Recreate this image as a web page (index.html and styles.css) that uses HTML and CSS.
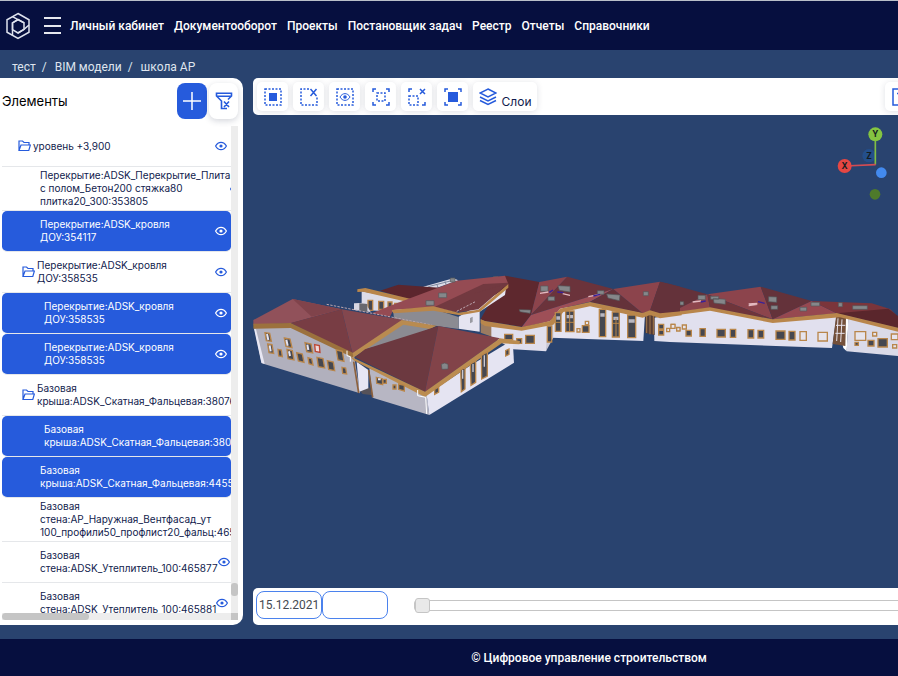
FILE: index.html
```html
<!DOCTYPE html>
<html lang="ru">
<head>
    <meta charset="UTF-8">
    <meta name="viewport" content="width=device-width, initial-scale=1.0">
    <title>школа АР | BIM модели</title>
    <link rel="stylesheet" href="styles.css">
</head>
<body>
    <svg width="0" height="0" class="sprite">
        <symbol id="eye" viewBox="0 0 12 10"><path d="M.6 5C3.2.1 8.800.1 11.400 5 8.800 9.900 3.200 9.900.6 5z" fill="none" stroke="currentColor" stroke-width="1.200"/><circle cx="6" cy="5" r="1.600" fill="currentColor"/></symbol>
        <symbol id="folder" viewBox="0 0 13 12"><path d="M1 10.500V1h3.500l1.500 1.500h5V5M1 10.500L3 5h9.400l-1.600 5.500z" fill="none" stroke="currentColor" stroke-width="1.200"/></symbol>
    </svg>

    <header class="header">
        <a href="#" class="logo" aria-label="Главная">
            <svg width="26" height="28" viewBox="0 0 26 28" fill="none" stroke="#dfe3ee" stroke-width="1.500">
                <path d="M13 1.500L24 7.800v12.400L13 26.500 2 20.200V7.800z"/>
                <path d="M13 7.500l6 3.300v6.600L13 21l-5.500-3.400v-6.800z"/>
                <path d="M7.500 23.500V10.800L13 7.500M7.500 4.600L19 10.800M24 13l-5 4.400-6 3.600"/>
            </svg>
        </a>
        <button class="burger" aria-label="Меню"><span></span><span></span><span></span></button>
        <nav class="nav">
            <a href="#">Личный кабинет</a>
            <a href="#">Документооборот</a>
            <a href="#">Проекты</a>
            <a href="#">Постановщик задач</a>
            <a href="#">Реестр</a>
            <a href="#">Отчеты</a>
            <a href="#">Справочники</a>
        </nav>
    </header>

    <div class="crumbs">
        <a href="#">тест</a><span>/</span><a href="#">BIM модели</a><span>/</span><a href="#">школа АР</a>
    </div>

    <main class="main">
        <aside class="sidebar">
            <div class="sidebar-head">
                <h2>Элементы</h2>
                <button class="btn-add" aria-label="Добавить"><svg width="18" height="18" viewBox="0 0 18 18" stroke="#fff" stroke-width="1.500"><path d="M9 0v18M0 9h18"/></svg></button>
                <button class="btn-filter" aria-label="Сбросить фильтр"><svg width="18" height="18" viewBox="0 0 18 18" fill="none" stroke="#265bdc" stroke-width="1.600"><path d="M12 16.500H6.500V9L1.500 4V1.300h15V4L13 7.500M2 4.200h14M9 9.500l5 5.500M14 9.500L9 15"/></svg></button>
            </div>
            <div class="tree-box">
                <ul class="tree">
                    <li class="row level"><svg class="folder"><use href="#folder"/></svg><span>уровень +3,900</span><svg class="eye"><use href="#eye"/></svg></li>
                    <li class="row item tall"><span>Перекрытие:ADSK_Перекрытие_Плита<br>с полом_Бетон200 стяжка80<br>плитка20_300:353805</span><svg class="eye"><use href="#eye"/></svg></li>
                    <li class="row item active"><span>Перекрытие:ADSK_кровля<br>ДОУ:354117</span><svg class="eye"><use href="#eye"/></svg></li>
                    <li class="row group"><svg class="folder"><use href="#folder"/></svg><span>Перекрытие:ADSK_кровля<br>ДОУ:358535</span><svg class="eye"><use href="#eye"/></svg></li>
                    <li class="row sub active"><span>Перекрытие:ADSK_кровля<br>ДОУ:358535</span><svg class="eye"><use href="#eye"/></svg></li>
                    <li class="row sub active"><span>Перекрытие:ADSK_кровля<br>ДОУ:358535</span><svg class="eye"><use href="#eye"/></svg></li>
                    <li class="row group"><svg class="folder"><use href="#folder"/></svg><span>Базовая<br>крыша:ADSK_Скатная_Фальцевая:38076</span></li>
                    <li class="row sub active"><span>Базовая<br>крыша:ADSK_Скатная_Фальцевая:3807</span></li>
                    <li class="row item active"><span>Базовая<br>крыша:ADSK_Скатная_Фальцевая:4455</span></li>
                    <li class="row item tall"><span>Базовая<br>стена:АР_Наружная_Вентфасад_ут<br>100_профили50_профлист20_фальц:465</span></li>
                    <li class="row item"><span>Базовая<br>стена:ADSK_Утеплитель_100:465877</span><svg class="eye"><use href="#eye"/></svg></li>
                    <li class="row item"><span>Базовая<br>стена:ADSK_Утеплитель_100:465881</span><svg class="eye"><use href="#eye"/></svg></li>
                </ul>
                <div class="track-y"><div class="thumb"></div></div>
                <div class="track-x"><div class="thumb"></div></div>
                <div class="corner"></div>
            </div>
        </aside>

        <section class="workspace">
            <div class="toolbar">
                <button aria-label="Выделить"><svg viewBox="0 0 18 18"><rect class="dash" x="1" y="1" width="16" height="16"/><path class="solid" d="M5 5h8v8H5z"/></svg></button>
                <button aria-label="Снять выделение"><svg viewBox="0 0 18 18"><path class="dash" d="M9 1H1v16h16V9"/><path class="line" d="M10.500 1l6 7M16.500 1l-6 7"/></svg></button>
                <button aria-label="Показать"><svg viewBox="0 0 18 18"><rect class="dash" x="1" y="1" width="16" height="16"/><path class="thin" d="M4 9c2.500-4.500 7.500-4.500 10 0-2.500 4.500-7.500 4.500-10 0z"/><circle class="solid" cx="9" cy="9" r="1.800"/></svg></button>
                <button aria-label="Рамка"><svg viewBox="0 0 18 18"><path class="line" d="M1 4V1h3M14 1h3v3M17 14v3h-3M4 17H1v-3"/><rect class="dash" x="5" y="5" width="8" height="8"/></svg></button>
                <button aria-label="Убрать рамку"><svg viewBox="0 0 18 18"><rect class="dash" x="1" y="8" width="9" height="9"/><path class="line" d="M1 4V1h3M17 14v3h-3M12 1l5 5M17 1l-5 5"/></svg></button>
                <button aria-label="Изолировать"><svg viewBox="0 0 18 18"><path class="line" d="M1 4V1h3M14 1h3v3M17 14v3h-3M4 17H1v-3"/><path class="solid" d="M4 4h10v10H4z"/></svg></button>
                <button class="layers"><svg viewBox="0 0 18 18"><path class="line" d="M9 1l8 4-8 4-8-4zM1 9l8 4 8-4M1 12.500l8 4 8-4"/></svg><span>Слои</span></button>
                <button class="last" aria-label="Вид"><svg viewBox="0 0 18 18"><path class="line" d="M1 1h16v16H1zM5 5.500h8"/></svg></button>
            </div>

            <div class="viewer">
                <svg class="scene" viewBox="9 -435 1935 1419" preserveAspectRatio="xMinYMid slice">
                    <!-- правое крыло -->
                    <g transform="translate(1260 0)">
                        <path fill="#e1e0ee" d="M-48 173L0 165l120-15 188 35 192-20-14 99L0 246l-47-3z"/>
                        <path fill="#fff" d="M500 170l36 5-6 99-10-10z"/>
                        <path fill="#74503a" d="M498 170h30l-2 88-38-6z"/>
                        <path stroke="#e8e4ee" stroke-width="3" fill="none" d="M504 175l-4 68M516 178l-4 68M498 196h28M496 220h28"/>
                        <path fill="#dadae8" d="M535 174l149 38v76l-154-14z"/>
                        <path fill="#64323a" d="M-30 65L0 72l112 31L0 160l-60-5z"/>
                        <path fill="#8c444c" d="M112 103L0 159l120-16z"/>
                        <path fill="#8c444c" d="M112 103l160-23 36 98z"/>
                        <path fill="#6f353b" d="M112 103l196 75-188-35z"/>
                        <path fill="#64323a" d="M272 80l153 43-117 55z"/>
                        <path fill="#964850" d="M425 123l75 37-192 18z"/>
                        <path fill="#7b353b" d="M425 123l180 7 55 17 24 23v20l-184-30z"/>
                        <path fill="#5a262c" d="M500 160l155-14 29 22v36z"/>
                        <path fill="#b9864b" d="M0 158l120-16 188 36 192-19 184 44v12l-174-43-202 17-188-37L0 168z"/>
                        <g class="win">
                            <path d="M4 193h10v10H4zM20 202h9v9h-9zM37 195h12v12H37zM555 215h32v26h-32zM608 217h12v11h-12zM664 222h20v17h-20zM668 254h12v10h-12zM444 217h28v26h-28zM390 215h19v26h-19z"/>
                            <g class="glass"><path d="M48 211h16v17H48zM90 206h16v23H90zM141 208h25v23h-25zM181 208h16v24h-16zM234 209h17v25h-17zM264 211h17v23h-17zM318 213h27v25h-27zM357 214h18v26h-18zM555 247h10v9h-10zM594 241h18v17h-18zM624 236h28v25h-28z"/></g>
                        </g>
                        <path class="vent" d="M84 106h22v13H84zM130 115l36 3v15l-34-4zM122 109h24v9h-24zM296 110l24 1v16l-24-2zM303 137h20v11h-20zM390 142h20v11h-20zM423 127h26v11h-26zM505 128h12v12h-12zM548 137h44v11h-44zM30 125h11v10H30z"/>
                        <path class="mark" d="M68 126l25-3M236 137l26-4M236 132l26-2"/>
                        <path class="mark blue" d="M92 126l15-3M264 125l20 5"/>
                    </g>

                    <!-- средняя часть -->
                    <g transform="translate(630 0)">
                        <path fill="#9b7b61" d="M62 178l34 14v38l-34-12z"/>
                        <path fill="#e4e3f1" d="M280 165l10-20 110-12 155 28-5 82-275-10z"/>
                        <path fill="#e0dfed" d="M94 192l91 16 95-30-22 96-98-6-66-38z"/>
                        <path fill="#c9c8d6" d="M280 178v55l-22 41 4-82z"/>
                        <path fill="#563c34" d="M556 162h28v63l-28-6z"/>
                        <path stroke="#a3774a" stroke-width="3" d="M560 165v54M570 165v58M580 165v58"/>
                        <path fill="#5e282e" d="M135 47l103 19-25 99-28 35-110-17-13-6z"/>
                        <path fill="#8c444c" d="M238 66l84-16-109 115z"/>
                        <path fill="#6b333b" d="M322 50l138 37-247 78z"/>
                        <path fill="#9e4f57" d="M213 165L460 87l-70 38-90 21-30 38-85 18z"/>
                        <path fill="#64323a" d="M460 87l88 73-158-34z"/>
                        <path fill="#8c444c" d="M460 87l140-22-30 87-22 8z"/>
                        <path fill="#64323a" d="M600 65l60 15v75l-60 7-30-10z"/>
                        <path fill="#b9864b" d="M62 178l13 5 110 18 85-18 30-37 90-20 158 33 22-8 30 9 65-6v12l-65 9-30-10-22 8-158-34-80 17-30 38-95 18-110-14-13-8z"/>
                        <g class="win glass">
                            <path d="M286 158h17v56h-17zM317 153h25v62h-25zM418 148h19v82h-19zM457 156h21v75h-21zM503 165h24v68h-24zM367 197h20v20h-20zM197 226h26v24h-26zM134 223h24v16h-24zM170 236h15v14h-15zM596 193h15v14h-15zM596 211h15v14h-15zM262 198h13v48h-13z"/>
                        </g>
                        <path class="win" d="M376 184h10v10h-10zM351 206h9v10h-9zM620 205h9v10h-9zM633 193h12v12h-12zM650 203h10v10h-10z"/>
                        <path stroke="#b9b8c2" stroke-width="10" d="M289 174h11M320 170h19M421 165h13M460 175h15M506 183h18"/>
                        <path stroke="#b9864b" stroke-width="3" d="M329 153v62M468 175v56M286 187h17M317 187h25M457 190h21"/>
                        <path class="vent" d="M100 50h14v17h-14zM242 78h22v16h-22zM294 77l36 2v17l-32-5zM264 110h20v12h-20zM178 149l34 1-2 10-30-5zM412 92h20v11h-20zM440 102l40 3-2 17-34-8zM550 95h15v12h-15z"/>
                        <path class="mark" d="M240 100l25-4M308 101l22 5M385 110l35-7"/>
                        <path class="mark blue" d="M268 97l11-7M292 96l18 2M400 108l20-5"/>
                    </g>

                    <!-- задний корпус -->
                    <path fill="#dddce8" d="M335 94l150 28-20 34-130-6zM520 80l90-25 15 6-85 30z"/>
                    <path stroke="#7d899f" stroke-width="3" d="M535 80l70-18M560 72l4 10M585 64l4 12"/>
                    <path fill="#5c262d" d="M390 92l55-18 165 12-50 35-80-2z"/>
                    <path fill="#b9864b" d="M322 88l24-4 140 34-10 9-137-32-17 1z"/>
                    <path class="win glass" d="M354 121h14v30h-14zM386 124h15v24h-15zM414 126h12v18h-12zM434 130h12v10h-12z"/>
                    <path fill="#d7d6e2" d="M312 130l34-2 16 28-50-6z"/>
                    <path fill="#68686f" d="M328 130l24 2v24l-24-4z"/>
                    <path fill="#e5e4f1" d="M626 170l142-85-3 20-76 50v60l-63-9z"/>
                    <path fill="#999aa2" d="M660 174l8-4v16l-8 4z"/>
                    <path fill="#8b8b92" d="M430 155l120-8 76 24v36l-126-17-68-12z"/>
                    <path fill="#954b53" d="M365 160l75-30L620 62l145-15 10 25-155 84-70-15-120 9-10 20z"/>
                    <path fill="#723940" d="M555 140L700 72l75-4-4 8-151 80z"/>
                    <path fill="#b9864b" d="M425 150l125-11 75 19 60-9 90-77v11l-85 72-60 11-80-14-120 8z"/>
                    <path fill="#723940" d="M625 157l60-9 90-78-100 30z"/>
                    <path class="vent" d="M528 122h24v14h-24zM566 99h24v14h-24zM601 54h14v12h-14z"/>
                    <path stroke="#bba5ae" stroke-width="3" stroke-dasharray="7 4" d="M620 154l58-30M230 133l315 62" fill="none"/>

                    <!-- передний корпус -->
                    <path fill="#b1b0bd" d="M12 200l110-2 190 88 18 114-295-90z"/>
                    <path fill="#e8e7f3" d="M12 206l6 2 26 104-10-4z"/>
                    <path fill="#565259" d="M330 392l28-10 10 24-30-4z"/>
                    <path fill="#e7e6f4" d="M320 305l35 25v55l-27 10z"/>
                    <path fill="#91515a" d="M10 180l118-63 147 31-153 42-112 4z"/>
                    <path fill="#80434b" d="M128 117l147 31-90 22z"/>
                    <path fill="#783d44" d="M275 148l33 134-186-93z"/>
                    <path fill="#83474e" d="M275 148l185 32-152 102z"/>
                    <path fill="#8b8b92" d="M345 268l115-78 90 12-80 35z"/>
                    <path fill="#9c713d" d="M10 191l112-2 188 90v14L122 204l-112 2z"/>
                    <path fill="#b98b50" d="M308 279l147-99 105 17-20 10-80-13-150 99z"/>
                    <path fill="#b7b6c3" d="M358 325l172 75 8 65-170-52z"/>
                    <path fill="#e5e4f2" d="M530 404l130-87 128-77 4 68-254 157z"/>
                    <path fill="#6c3940" d="M315 292l30-24 220-70-40 198z"/>
                    <path fill="#824349" d="M565 198l185 37-225 161z"/>
                    <path fill="#bb8c50" d="M300 289l225 106 225-160 60 8-2 10-53-3-230 161-215-110z"/>
                    <path stroke="#8d613d" stroke-width="5" d="M311 305l15 94M356 330l12 82"/>
                    <path stroke="#fff" stroke-width="3" fill="none" d="M291 272v15l10 3v15M503 390v17l24 5 3 50"/>
                    <g class="win glass">
                        <path d="M45 218l14 2 5 24-15-2zM53 252l13 2 5 26-14-2zM84 268l10 2 3 20-11-2zM103 234l17 3 6 26-18-4zM111 268l16 4 5 28-18-4zM140 278l17 4 5 25-17-4zM165 248l18 4 5 27-18-4zM174 293l11 3 4 19-12-4zM201 292l18 4 5 28-19-4zM232 302l18 4 4 26-18-4zM259 270l18 4 5 30-18-4zM276 322l11 2 3 18-12-2zM379 352l18 4 1 18-18-4zM399 358h10v12h-10zM429 375h9v12h-9zM446 372l17 4v17l-17-5zM554 388l12-7v15l-12 7zM632 330l13-7v64l-11 8zM661 312l16-9v64l-14 9zM694 286l18-10v72l-17 9zM767 272l10-5v16l-10 5z"/>
                    </g>
                    <path d="M194 254l14 3 2 20-14-3z" fill="#eed8d9" stroke="#bd4734" stroke-width="4"/>
                    <path stroke="#e6e5f1" stroke-width="6" d="M51 222l4 18M59 256l3 18M109 239l4 18M117 274l3 14M172 254l3 16M384 358h8"/>
                    <path stroke="#c9c8d2" stroke-width="4" d="M638 330v26M669 312v24M703 286v34"/>
                    <path class="vent" d="M574 313l10-4 10 4v14l-18 1z"/>

                    <!-- оси -->
                    <g transform="translate(1650 -570)">
                        <circle cx="207" cy="257" r="20" fill="#244f8b"/>
                        <path stroke="#80bd45" stroke-width="5" d="M226 194v90"/>
                        <path stroke="#d24c53" stroke-width="5" d="M134 288l93-4"/>
                        <circle cx="226" cy="193" r="21" fill="#84c441"/>
                        <circle cx="134" cy="288" r="21" fill="#e64743"/>
                        <circle cx="244" cy="308" r="16" fill="#438aee"/>
                        <circle cx="225" cy="373" r="16" fill="#4e7a2b"/>
                        <text class="axis" x="226" y="202">Y</text>
                        <text class="axis" x="134" y="297">X</text>
                        <text class="axis" x="207" y="266">Z</text>
                    </g>
                </svg>
            </div>

            <div class="timeline">
                <input class="date" type="text" value="15.12.2021" aria-label="Дата начала">
                <input class="date" type="text" value="" aria-label="Дата окончания">
                <input class="slider" type="range" min="0" max="100" value="0" aria-label="Шкала времени">
            </div>
        </section>
    </main>

    <footer class="footer">© Цифровое управление строительством</footer>
</body>
</html>
```
FILE: styles.css
```css
* { box-sizing: border-box; }
body { margin: 0; min-height: 100vh; display: flex; flex-direction: column; background: #29436f; color: #111b4d; font-family: Inter, "Noto Sans", sans-serif; font-size: 12px; overflow: hidden; }
a { color: inherit; text-decoration: none; }
button { border: 0; padding: 0; cursor: pointer; font-family: inherit; }
svg { flex: none; }
.sprite { position: absolute; }

.header { height: 50px; flex: none; display: flex; align-items: center; padding-left: 5px; background: #060f3f; border-top: 1px solid #b9bfc9; color: #fff; }
.logo { display: flex; }
.burger { width: 17px; height: 17px; margin: 0 9px 0 13px; background: none; display: flex; flex-direction: column; justify-content: space-between; }
.burger span { width: 17px; height: 2px; background: #e6e8ef; }
.nav { display: flex; gap: 10px; font: 500 12px Roboto, sans-serif; white-space: nowrap; }

.crumbs { height: 28px; flex: none; display: flex; align-items: center; padding: 5px 0 0 12px; color: #dfe5ee; font-family: Roboto, sans-serif; }
.crumbs span { margin: 0 8px 0 6px; }

.main { flex: 1; display: flex; gap: 10px; min-height: 0; padding-bottom: 14px; }

.sidebar { width: 243px; flex: none; display: flex; flex-direction: column; background: #fff; border-radius: 0 10px 10px 0; padding: 5px 5px 5px 2px; }
.sidebar-head { height: 43px; flex: none; display: flex; align-items: flex-start; gap: 2px; }
.sidebar-head h2 { flex: 1; margin: 0; font-size: 13px; font-weight: 400; line-height: 36px; color: #000; }
.sidebar-head button { width: 29px; height: 36px; border-radius: 8px; display: flex; align-items: center; justify-content: center; }
.sidebar-head .btn-add { background: #265bdc; width: 30px; }
.btn-filter { background: #fff; box-shadow: 0 2px 6px rgba(40,50,80,0.2); }

.tree-box { flex: 1; min-height: 0; display: grid; grid-template-columns: 1fr 7px; grid-template-rows: 1fr 7px; }
.tree { list-style: none; margin: 0; padding: 0; min-width: 0; height: 487px; overflow: hidden; }
.row { height: 41px; display: flex; align-items: center; border-bottom: 1px solid #e5e7ea; padding-right: 4px; font-size: 10px; line-height: 13px; white-space: nowrap; }
.row.tall { height: 44px; }
.row.level { padding-left: 16px; }
.row.group { padding-left: 20px; }
.row.level span, .row.group span { padding-left: 2px; }
.row.item { padding-left: 38px; }
.row.sub { padding-left: 42px; }
.row.active { background: #265bdc; background-clip: padding-box; color: #fff; border-radius: 5px; }
.folder { width: 13px; height: 12px; color: #265bdc; }
.eye { width: 12px; height: 10px; margin-left: auto; color: #265bdc; }
.active .eye { color: #fff; }
.track-y { background: #ededed; padding-top: 457px; }
.track-y .thumb { height: 13px; border-radius: 3px; background: #c5c5c5; }
.track-x { background: #ededed; }
.track-x .thumb { width: 38%; height: 7px; border-radius: 4px; background: #c5c5c5; }
.corner { background: #c5c5c5; }

.workspace { flex: 1; min-width: 0; display: flex; flex-direction: column; overflow: hidden; }
.toolbar { height: 37px; flex: none; display: flex; align-items: center; gap: 5px; padding: 0 4px; background: #fff; border-radius: 5px 0 0 5px; }
.toolbar button { width: 31px; height: 29px; flex: none; display: flex; align-items: center; justify-content: center; background: #fff; border-radius: 5px; box-shadow: 0 1px 6px rgba(40,50,80,0.15); }
.toolbar svg { width: 18px; height: 18px; fill: none; stroke: #265bdc; }
.toolbar .dash { stroke-width: 1.500; stroke-dasharray: 2 1.500; }
.toolbar .line { stroke-width: 1.500; }
.toolbar .thin { stroke-width: 1; }
.toolbar .solid { fill: #265bdc; stroke: none; }
.toolbar .layers { width: 64px; gap: 5px; }
.layers span { font-size: 12px; color: #111b4d; padding-top: 10px; }
.toolbar .last { margin-left: auto; margin-right: -22px; }

.viewer { flex: 1; min-height: 0; display: flex; }
.scene { width: 100%; height: 100%; }
.win { fill: #e6e4ec; stroke: #b9864b; stroke-width: 4; }
.glass, .win .glass { fill: #454750; }
.vent { fill: #85878a; stroke: #55585b; stroke-width: 2; }
.mark { stroke: #e3b9c0; stroke-width: 4; }
.mark.blue { stroke: #37209b; }
.axis { font: bold 25px Inter, sans-serif; text-anchor: middle; fill: #141c20; }

.timeline { height: 37px; flex: none; display: flex; align-items: center; padding: 0 0 3px 3px; background: #fff; border-radius: 5px 0 0 5px; }
.date { width: 66px; height: 28px; border: 1px solid #4b82ed; border-radius: 8px; padding: 0 2px; font: 12px Roboto, sans-serif; color: #444950; background: #fff; }
.slider { -webkit-appearance: none; appearance: none; flex: 1; min-width: 0; height: 11px; margin: 0 -8px 0 26px; background: #fff; border: 1px solid #c5c5c5; border-radius: 3px; }
.slider::-webkit-slider-thumb { -webkit-appearance: none; width: 15px; height: 15px; border: 1px solid #c5c5c5; border-radius: 3px; background: #e9e9e9; }

.footer { height: 37px; flex: none; display: flex; align-items: center; justify-content: center; padding-left: 280px; background: #060f3f; color: #fff; font: 500 12px Roboto, sans-serif; }
```
